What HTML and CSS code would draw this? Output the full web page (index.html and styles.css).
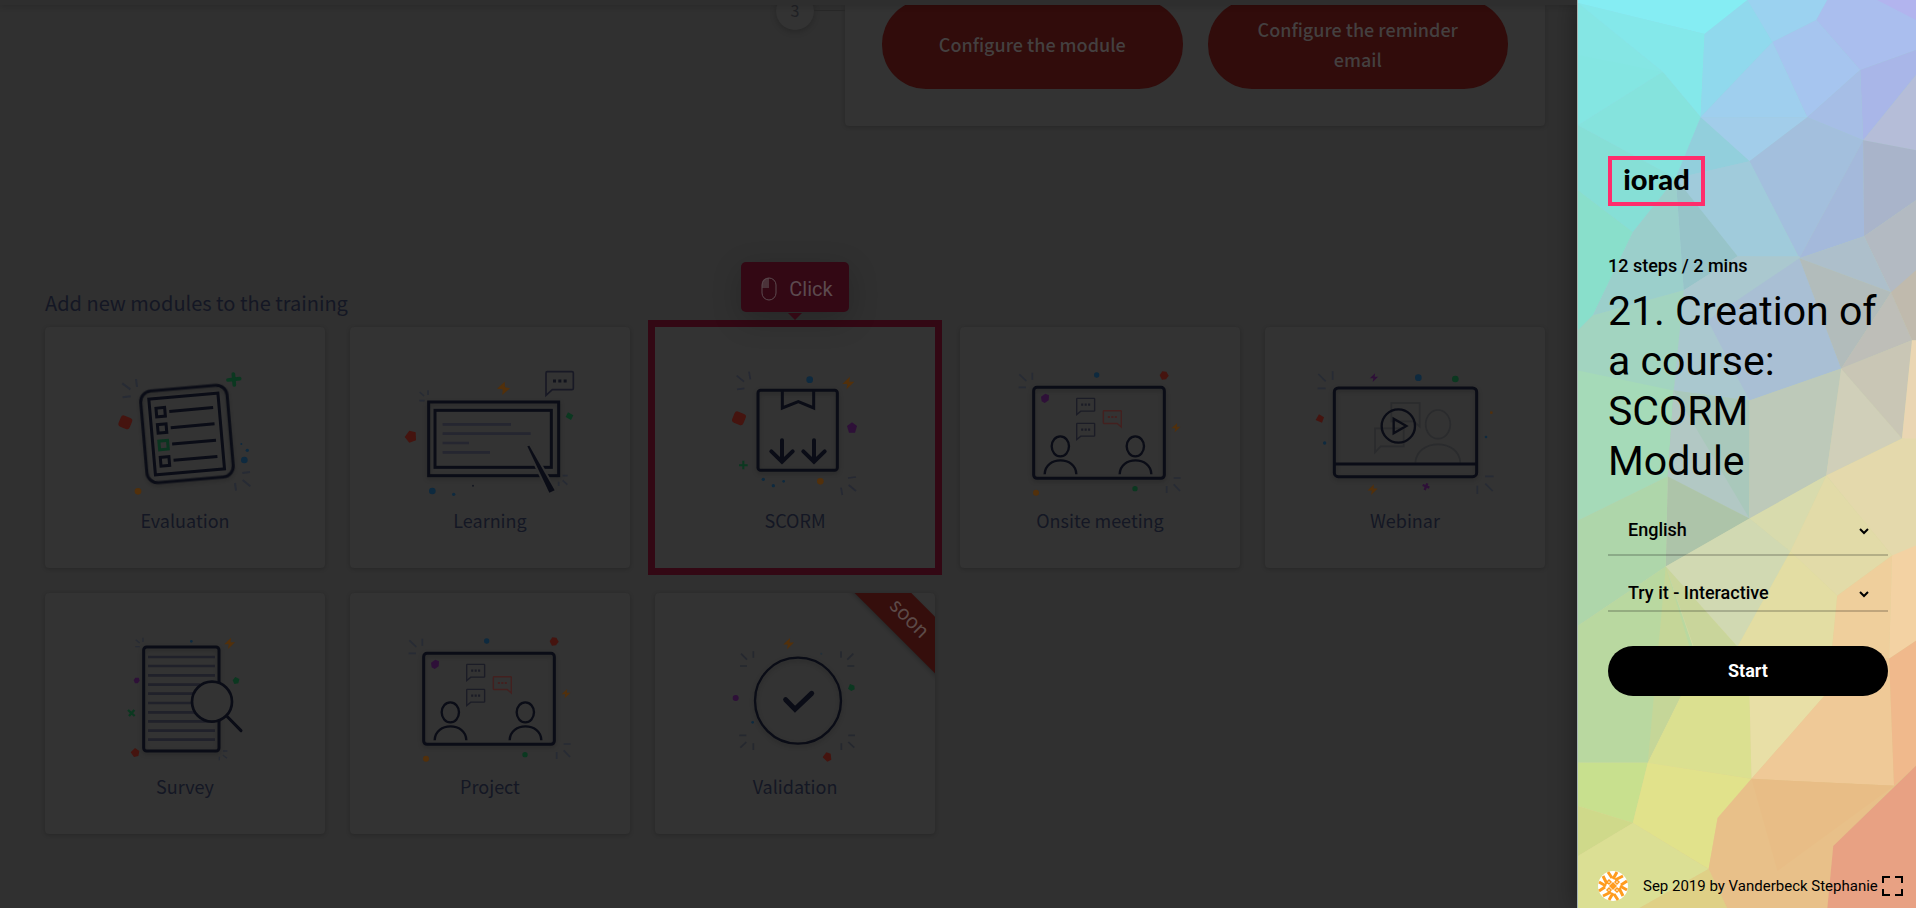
FILE: index.html
```html
<!DOCTYPE html>
<html lang="en">
<head>
    <meta charset="utf-8">
    <meta name="viewport" content="width=device-width, initial-scale=1">
    <title>21. Creation of a course: SCORM Module</title>
    <link rel="stylesheet" href="styles.css">
</head>
<body>
    <!-- Shared shapes for the module drawings -->
    <svg class="defs" width="0" height="0" aria-hidden="true">
        <symbol id="bolt" viewBox="-20 -20 40 40" overflow="visible">
            <path d="M5-20L-19 3H-3L-6 20L19-4H3Z"/>
        </symbol>
        <symbol id="bubble" viewBox="0 0 56 50" overflow="visible">
            <path d="M4 2H52Q54 2 54 4V37Q54 39 52 39H14L2 49V4Q2 2 4 2Z" fill="none" stroke="currentColor" stroke-width="4"/>
            <path d="M15 20h6M25 20h6M35 20h6" stroke="currentColor" stroke-width="6"/>
        </symbol>
        <symbol id="person" viewBox="0 0 100 116" overflow="visible">
            <ellipse cx="49" cy="32" rx="26" ry="30"/>
            <path d="M2 116C3 60 96 60 97 116"/>
        </symbol>
        <symbol id="meeting" viewBox="150 141 600 390">
            <g fill="none" stroke="#272b34" stroke-width="5">
                <path d="M208 163L229 183M247 158V179M206 202H228M671 474H692M671 493L690 513M650 498V519"/>
            </g>
            <rect x="251" y="202" width="392" height="273" rx="10" class="ink shade"/>
            <g class="ink thin">
                <use href="#person" x="282" y="347" width="100" height="116"/>
                <use href="#person" x="507" y="347" width="100" height="116"/>
            </g>
            <use href="#bubble" x="378" y="233" width="58" height="52" color="#1b1c26"/>
            <use href="#bubble" x="378" y="308" width="58" height="52" color="#1b1c26"/>
            <g transform="translate(516 270) scale(-1 1)">
                <use href="#bubble" width="58" height="52" color="#43201f"/>
            </g>
            <path d="M273 230l13-9 11 5-1 15-12 8-9-5z" class="purple"/>
            <circle cx="440" cy="165" r="8" class="blue"/>
            <path d="M637 154l12 1 7 12-8 11-12 1-7-13z" class="red"/>
            <use href="#bolt" x="664" y="309" width="28" height="28" class="orange"/>
            <circle cx="258" cy="518" r="9" class="orange"/>
            <circle cx="555" cy="506" r="8" class="green"/>
        </symbol>
    </svg>

    <main class="training">
        <div class="topbar"></div>

        <section class="timeline">
            <span class="step-number">3</span>
            <div class="step-card">
                <button type="button" class="pill">Configure the module</button>
                <button type="button" class="pill">Configure the reminder email</button>
            </div>
        </section>

        <section class="modules">
            <h2>Add new modules to the training</h2>
            <div class="module-grid">
                <div class="module">
                    <svg class="art" viewBox="165 261 600 390" aria-hidden="true">
                        <path d="M277 310L301 328M318 297L321 321M278 352L302 349M637 579L660 576M638 600L661 619M615 609L618 632" fill="none" stroke="#272b34" stroke-width="6"/>
                        <rect x="341" y="324" width="260" height="276" rx="32" transform="rotate(-5 471 462)" class="ink shade"/>
                        <rect x="366" y="348" width="208" height="228" transform="rotate(-5 470 462)" class="ink"/>
                        <g transform="rotate(-5 470 462)" class="ink">
                            <rect x="385" y="377" width="26" height="26"/>
                            <rect x="385" y="426" width="26" height="26"/>
                            <rect x="385" y="476" width="26" height="26" stroke="#0b3520"/>
                            <rect x="385" y="525" width="26" height="26"/>
                            <path d="M424 390H556M424 439H556M424 488H556M424 537H556"/>
                        </g>
                        <path d="M610 282l3 33M594 300l35-4" stroke="#0b3820" stroke-width="11" stroke-linecap="round"/>
                        <rect x="268" y="409" width="36" height="36" rx="9" transform="rotate(22 286 427)" class="red"/>
                        <circle cx="324" cy="634" r="10" class="orange"/>
                        <circle cx="643" cy="540" r="10" class="blue"/>
                        <circle cx="652" cy="511" r="5" class="blue"/>
                        <circle cx="634" cy="492" r="3" class="blue"/>
                    </svg>
                    <span class="module-name">Evaluation</span>
                </div>

                <div class="module">
                    <svg class="art" viewBox="150 171 600 390" aria-hidden="true">
                        <path d="M239 246L252 258M264 241V255M238 272H254M668 497H683M668 511L682 524M656 515V528" fill="none" stroke="#272b34" stroke-width="5"/>
                        <rect x="266" y="276" width="390" height="221" class="ink shade"/>
                        <rect x="285" y="301" width="349" height="171" class="ink"/>
                        <path d="M308 343H513M308 371H572M308 399H387M308 427H450" stroke="#252630" stroke-width="8"/>
                        <path d="M562 409L568 407L644 541L628 548Z" fill="#0a0c16" stroke="#333" stroke-width="12" paint-order="stroke"/>
                        <path d="M622 185H696Q700 185 700 189V235Q700 239 696 239H637L618 256V189Q618 185 622 185Z" fill="none" stroke="#181925" stroke-width="5"/>
                        <path d="M639 213h9M655 213h9M671 213h9" stroke="#11131d" stroke-width="9"/>
                        <path d="M494 215l-23 21 17 2-1 17 23-20-15-3z" class="orange"/>
                        <path d="M194 381l14-19 19 5 1 24-20 7z" class="red"/>
                        <path d="M684 307l16 9-7 14-16-9z" class="green"/>
                        <circle cx="277" cy="543" r="10" class="blue"/>
                        <circle cx="341" cy="553" r="5" class="blue"/>
                        <circle cx="399" cy="527" r="3" fill="#151821"/>
                    </svg>
                    <span class="module-name">Learning</span>
                </div>

                <div class="module active">
                    <div class="hint"><svg viewBox="0 0 16 24" aria-hidden="true"><path d="M8 1H7Q1 1 1 7V11H8Z" fill="#4b3239"/><rect x="1" y="1" width="14" height="22" rx="7" fill="none" stroke="#5c4a4f" stroke-width="1"/></svg>Click</div>
                    <svg class="art" viewBox="165 351 600 390" aria-hidden="true">
                        <path d="M290 377L312 395M327 365L331 388M291 418L313 415M624 684L648 681M626 705L648 723M603 713L607 735" fill="none" stroke="#262933" stroke-width="5"/>
                        <rect x="354" y="421" width="238" height="240" rx="8" class="ink shade"/>
                        <path d="M427 421V474L475 455L521 474V421" class="ink"/>
                        <path d="M426 571V635M394 604L426 635L458 604M522 571V635M490 604L522 635L554 604" class="ink round"/>
                        <circle cx="509" cy="389" r="10" class="blue"/>
                        <use href="#bolt" x="606" y="380" width="38" height="38" class="orange"/>
                        <rect x="279" y="487" width="36" height="36" rx="9" transform="rotate(22 297 505)" class="red"/>
                        <path d="M636 517l15 11-6 20h-18l-6-20z" class="purple"/>
                        <path d="M310 632v26M297 646h26" stroke="#0b3820" stroke-width="6"/>
                        <circle cx="370" cy="688" r="5" class="blue"/>
                        <circle cx="400" cy="707" r="5" class="blue"/>
                        <circle cx="431" cy="694" r="4" class="blue"/>
                        <circle cx="541" cy="694" r="10" class="orange"/>
                    </svg>
                    <span class="module-name">SCORM</span>
                </div>

                <div class="module">
                    <svg class="art" aria-hidden="true"><use href="#meeting"/></svg>
                    <span class="module-name">Onsite meeting</span>
                </div>

                <div class="module">
                    <svg class="art" viewBox="165 141 600 390" aria-hidden="true">
                        <path d="M205 162L227 184M248 154V179M203 205H227M705 469H731M706 491L728 513M682 497V522" fill="none" stroke="#272b34" stroke-width="5"/>
                        <g fill="none" stroke="#2a2b2d" stroke-width="5">
                            <path d="M424 249H509V320L492 304H424ZM461 325V379H392L375 397V325Z"/>
                            <ellipse cx="564" cy="313" rx="37" ry="43"/>
                            <path d="M496 428C500 355 628 355 631 428"/>
                        </g>
                        <rect x="253" y="204" width="427" height="266" rx="12" class="ink shade"/>
                        <path d="M253 432H680" class="ink"/>
                        <circle cx="445" cy="318" r="50" class="ink thin"/>
                        <path d="M431 296V340L469 318Z" class="ink thin"/>
                        <use href="#bolt" x="359" y="160" width="26" height="26" class="purple"/>
                        <circle cx="505" cy="173" r="10" class="blue"/>
                        <circle cx="616" cy="177" r="10" class="green"/>
                        <path d="M207 283l15 9-6 16-19-8z" class="red"/>
                        <circle cx="224" cy="369" r="5" class="blue"/>
                        <circle cx="724" cy="278" r="4" class="orange"/>
                        <circle cx="708" cy="351" r="4" class="blue"/>
                        <use href="#bolt" x="352" y="493" width="32" height="32" class="orange"/>
                        <path d="M518 495l20 8M532 490l-8 20" stroke="#2e1038" stroke-width="7"/>
                    </svg>
                    <span class="module-name">Webinar</span>
                </div>

                <div class="module">
                    <svg class="art" viewBox="165 159 600 390" aria-hidden="true">
                        <path d="M317 179L329 189M339 173V186M316 200H329M579 513H592M579 526L591 535M568 530V541" fill="none" stroke="#272b34" stroke-width="4"/>
                        <rect x="341" y="201" width="226" height="312" rx="9" class="ink shade"/>
                        <path d="M354 231H555M354 258H555M354 286H555M354 314H510M354 341H500M354 369H490M354 397H500M354 424H555M354 452H555M354 479H555" stroke="#20212a" stroke-width="8"/>
                        <circle cx="546" cy="365" r="60" fill="#333" stroke="#0a0c16" stroke-width="8"/>
                        <path d="M590 408L633 452" class="ink" stroke-linecap="round"/>
                        <circle cx="484" cy="184" r="4" class="blue"/>
                        <use href="#bolt" x="582" y="173" width="34" height="34" class="orange"/>
                        <path d="M316 293h10l3 9-6 8h-8l-4-9z" class="purple"/>
                        <path d="M616 291l12 6-3 13-12 2-5-11z" class="green"/>
                        <path d="M294 390l20 18M313 390l-16 18" stroke="#0b3820" stroke-width="7"/>
                        <path d="M315 504l13 9-3 15-13 3-10-14z" class="red"/>
                    </svg>
                    <span class="module-name">Survey</span>
                </div>

                <div class="module">
                    <svg class="art" aria-hidden="true"><use href="#meeting"/></svg>
                    <span class="module-name">Project</span>
                </div>

                <div class="module">
                    <div class="ribbon-box"><span class="ribbon">soon</span></div>
                    <svg class="art" viewBox="165 159 600 390" aria-hidden="true">
                        <path d="M303 221L321 239M340 214V233M300 258H321M640 221L622 239M603 214V233M622 258H643M298 466H319M301 503L319 486M340 490V510M625 466H645M625 486L643 503M604 490V510" fill="none" stroke="#25282f" stroke-width="5"/>
                        <circle cx="474" cy="362" r="129" class="ink shade thin"/>
                        <path d="M437 359L465 388L515 340" class="ink round check"/>
                        <use href="#bolt" x="429" y="174" width="34" height="34" class="orange"/>
                        <circle cx="287" cy="354" r="9" class="purple"/>
                        <path d="M630 312l13 5 1 11-10 5-10-7z" class="green"/>
                        <circle cx="544" cy="221" r="3" fill="#22303a"/>
                        <circle cx="338" cy="427" r="4" class="blue"/>
                        <path d="M559 517l13 4 2 18-12 6-14-13z" class="red"/>
                    </svg>
                    <span class="module-name">Validation</span>
                </div>
            </div>
        </section>
    </main>

    <aside class="panel">
        <svg class="panel-bg" viewBox="0 0 339 908" preserveAspectRatio="none" aria-hidden="true">
            <linearGradient id="base" x1="0.2" y1="0" x2="0.5" y2="1">
                <stop offset="0" stop-color="#8fdfee"/>
                <stop offset="0.3" stop-color="#a4cad2"/>
                <stop offset="0.5" stop-color="#bccdb6"/>
                <stop offset="0.7" stop-color="#dcdca2"/>
                <stop offset="1" stop-color="#e2c58c"/>
            </linearGradient>
            <rect width="339" height="908" fill="url(#base)"/>
            <path fill="#dbe09a" d="M116 640H255L248 700H100Z"/>
            <path fill="#85edf3" d="M0 0H170L127 34L0 3Z"/>
            <path fill="#84e8ea" d="M0 3L127 34L123 117L85 72Z"/>
            <path fill="#85e6e4" d="M0 3L85 72L0 60Z"/>
            <path fill="#84e6e2" d="M0 55L85 72L0 125Z"/>
            <path fill="#85e3dd" d="M85 72L123 117L98 178L0 125Z"/>
            <path fill="#86dfd6" d="M0 125L98 178L55 232L0 190Z"/>
            <path fill="#89dfcb" d="M0 190L55 232L15 315L0 330Z"/>
            <path fill="#90d9ed" d="M170 0L195 42L123 117L127 34Z"/>
            <path fill="#9bd2f0" d="M170 0H250L239 20L195 42Z"/>
            <path fill="#aabeee" d="M250 0H339V50L283 70L239 20Z"/>
            <path fill="#b2b4ee" d="M300 0H339V20Z"/>
            <path fill="#a6c5ef" d="M239 20L283 70L230 117L195 42Z"/>
            <path fill="#9fcfee" d="M195 42L230 117H123Z"/>
            <path fill="#a2cdea" d="M123 117H230L172 161Z"/>
            <path fill="#a9b6e8" d="M283 70L339 50V75L286 140Z"/>
            <path fill="#a6bee6" d="M230 117L283 70L286 140Z"/>
            <path fill="#b5bdd8" d="M339 75V150L286 140Z"/>
            <path fill="#a3bfdd" d="M172 161L230 117L286 140L222 258Z"/>
            <path fill="#a4b9db" d="M286 140L287 236L222 258Z"/>
            <path fill="#92cfdc" d="M123 117L172 161L98 178Z"/>
            <path fill="#a0cbdb" d="M98 178L172 161L222 258L160 256Z"/>
            <path fill="#a9b4ca" d="M286 140L339 150V200L287 236Z"/>
            <path fill="#b3bac2" d="M339 200V300L314 292L287 236Z"/>
            <path fill="#97c4c9" d="M98 178L160 256L106 290Z"/>
            <path fill="#9bcfcb" d="M98 178L55 232L15 315L106 290Z"/>
            <path fill="#aac8cf" d="M106 290L160 256H222L264 368L172 400L96 390Z"/>
            <path fill="#a9bfd4" d="M222 258L264 368L172 400L130 320Z"/>
            <path fill="#adbfcb" d="M222 258L287 236L314 292Z"/>
            <path fill="#b2bcbb" d="M222 258L314 292L264 368Z"/>
            <path fill="#bebeb8" d="M314 292L335 340L264 368Z"/>
            <path fill="#c0baad" d="M314 292L339 270V340H335Z"/>
            <path fill="#a2d4c0" d="M15 315L106 290L96 390L0 375V330Z"/>
            <path fill="#a5dab8" d="M0 370L96 390L90 476L0 520Z"/>
            <path fill="#a9c8bb" d="M96 390L172 400V518L90 476Z"/>
            <path fill="#b2c8c4" d="M96 390L172 518L90 476Z"/>
            <path fill="#bdc9b9" d="M172 400L264 368L249 475L172 518Z"/>
            <path fill="#d0cfb9" d="M264 368L325 438L249 475Z"/>
            <path fill="#c9c6b5" d="M264 368L335 340L325 438Z"/>
            <path fill="#ead6b3" d="M335 340H339V440L325 438Z"/>
            <path fill="#e4d9ac" d="M249 475L325 438H339V550L315 555Z"/>
            <path fill="#adc4a9" d="M90 476L172 518L88 566Z"/>
            <path fill="#d8dbad" d="M172 518L249 475L213 551Z"/>
            <path fill="#e2dba8" d="M249 475L315 555L260 595L213 551Z"/>
            <path fill="#aed6aa" d="M0 520L90 476L88 566L0 625Z"/>
            <path fill="#d1d9b2" d="M88 566L172 518L213 551L160 646Z"/>
            <path fill="#c9d59b" d="M88 566L160 646H116Z"/>
            <path fill="#b9d8a0" d="M0 625L88 566L116 648L70 762H0Z"/>
            <path fill="#c5d698" d="M88 566L116 660L104 694L70 762Z"/>
            <path fill="#e3dda3" d="M213 551L260 595L255 646H160Z"/>
            <path fill="#efcf9c" d="M260 595L315 555L312 658L255 646Z"/>
            <path fill="#f3d2a3" d="M339 545V640L312 658L315 555Z"/>
            <path fill="#dbe090" d="M104 694H172L174 778L70 762Z"/>
            <path fill="#e8dfa6" d="M172 694H248L174 778Z"/>
            <path fill="#efc997" d="M248 694L255 646L312 658L317 785L174 778Z"/>
            <path fill="#f0b98c" d="M312 658L339 640V765L317 785Z"/>
            <path fill="#c8e08e" d="M0 762H70L55 822L0 805Z"/>
            <path fill="#cfd98a" d="M0 805L55 822L0 855Z"/>
            <path fill="#e1e28b" d="M70 762L174 778L140 817L131 868L55 822Z"/>
            <path fill="#dbdf94" d="M0 855L55 822L131 868L60 908H0Z"/>
            <path fill="#e8c089" d="M174 778L317 785L256 845L250 908H150L131 868L140 817Z"/>
            <path fill="#e8bd86" d="M174 778L317 785L200 870Z"/>
            <path fill="#e8a183" d="M256 845L339 765V908H250Z"/>
            <path fill="#dfd086" d="M131 868L150 908H60Z"/>
        </svg>

        <div class="intro">
            <a class="logo" href="#">iorad</a>
            <p class="meta">12 steps / 2 mins</p>
            <h1>21. Creation of a course: SCORM Module</h1>

            <div class="field">
                <select aria-label="Language">
                    <option>English</option>
                </select>
                <svg viewBox="0 0 12 8" aria-hidden="true"><path d="M2 2L6 6L10 2"/></svg>
            </div>
            <div class="field compact">
                <select aria-label="Mode">
                    <option>Try it - Interactive</option>
                </select>
                <svg viewBox="0 0 12 8" aria-hidden="true"><path d="M2 2L6 6L10 2"/></svg>
            </div>
            <button type="button" class="start">Start</button>
        </div>

        <footer class="credits">
            <svg class="avatar" viewBox="0 0 30 30" aria-hidden="true">
                <circle cx="15" cy="15" r="15" fill="#fff"/>
                <g id="quarter" fill="none" stroke="#ff9c1f">
                    <path d="M10 1L14 7M19 1L15 8M25 5L17 9" stroke-width="3"/>
                    <path d="M11 9L13 11L11 13L9 11Z" stroke-width="1.5"/>
                </g>
                <use href="#quarter" transform="rotate(90 15 15)"/>
                <use href="#quarter" transform="rotate(180 15 15)"/>
                <use href="#quarter" transform="rotate(270 15 15)"/>
                <path d="M15 11L19 15L15 19L11 15Z" fill="#ff9c1f"/>
            </svg>
            <span>Sep 2019 by Vanderbeck Stephanie</span>
            <button type="button" class="fullscreen" aria-label="Full screen">
                <svg viewBox="0 0 21 20" aria-hidden="true"><path d="M1 7V1H8M13 1H20V7M20 13V19H13M8 19H1V13"/></svg>
            </button>
        </footer>
    </aside>
</body>
</html>
```

FILE: styles.css
```css
* {
    box-sizing: border-box;
}

body {
    margin: 0;
    min-height: 100vh;
    display: flex;
    background: #303030;
    color: #141724;
    font-family: "Noto Sans CJK SC", "Noto Sans", sans-serif;
}

button, select {
    font: inherit;
    border: none;
    cursor: pointer;
}

.defs {
    position: absolute;
}

/* Dimmed training page */
.training {
    flex: 1;
    min-width: 0;
    overflow: hidden;
}

.topbar {
    position: relative;
    z-index: 1;
    height: 5px;
    background: #2e2e2e;
    box-shadow: 0 1px 6px rgba(0, 0, 0, 0.2);
}

.timeline {
    display: flex;
    justify-content: flex-end;
    padding-right: 32px;
}

.step-number {
    width: 38px;
    height: 38px;
    margin-top: -13px;
    border-radius: 50%;
    background: #333;
    color: #202125;
    font-size: 16px;
    line-height: 36px;
    text-align: center;
    box-shadow: 0 2px 6px rgba(0, 0, 0, 0.2);
}

.step-card {
    position: relative;
    width: 700px;
    margin-left: 31px;
    padding: 0 37px 37px;
    display: flex;
    gap: 25px;
    background: #333;
    border-radius: 0 0 4px 4px;
    box-shadow: 0 1px 4px rgba(0, 0, 0, 0.2);
}

.step-card::before {
    content: "";
    position: absolute;
    top: 5px;
    left: -31px;
    width: 31px;
    height: 1px;
    background: #282828;
}

.pill {
    flex: 1;
    height: 89px;
    margin-top: -5px;
    padding: 0 40px 2px;
    border-radius: 44px;
    background: #310c0b;
    color: #444040;
    font-size: 18px;
    font-weight: 500;
    line-height: 30px;
}

.modules {
    padding: 162px 32px 75px 45px;
}

.modules h2 {
    margin: 0 0 9px;
    font-size: 20px;
    font-weight: 400;
    line-height: 30px;
}

.module-grid {
    display: grid;
    grid-template-columns: repeat(5, 1fr);
    gap: 25px;
}

.module {
    position: relative;
    height: 241px;
    padding-top: 40px;
    display: flex;
    flex-direction: column;
    align-items: center;
    gap: 8px;
    background: #333;
    border-radius: 4px;
    box-shadow: 0 1px 4px rgba(0, 0, 0, 0.2);
}

.module.active {
    border-radius: 0;
    box-shadow: 0 0 0 7px #330814;
}

.module-name {
    font-size: 18px;
    line-height: 30px;
}

.art {
    width: 200px;
    height: 130px;
}

.ink {
    fill: none;
    stroke: #0a0c16;
    stroke-width: 9;
}

.thin {
    stroke-width: 7;
}

.round {
    stroke-width: 12;
    stroke-linecap: round;
}

.check {
    stroke-width: 15;
}

.shade {
    filter: drop-shadow(0 6px 6px rgba(0, 0, 0, 0.2));
}

.red { fill: #45140f; }
.blue { fill: #0e2a3f; }
.green { fill: #0b3820; }
.orange { fill: #52300b; }
.purple { fill: #2e1038; }

/* Callout over the highlighted module */
.hint {
    position: absolute;
    z-index: 1;
    bottom: calc(100% + 15px);
    left: 50%;
    transform: translateX(-50%);
    width: 108px;
    height: 50px;
    padding: 3px 0 0 4px;
    display: flex;
    align-items: center;
    justify-content: center;
    gap: 12px;
    border-radius: 5px;
    background: #330814;
    color: #5c4a4f;
    font-family: Roboto, sans-serif;
    font-size: 20px;
    box-shadow: 0 8px 30px rgba(0, 0, 0, 0.2);
}

.hint svg {
    width: 16px;
    height: 24px;
}

.hint::after {
    content: "";
    position: absolute;
    top: 51px;
    left: 47px;
    border: 7px solid transparent;
    border-top-color: #330814;
    border-bottom: none;
}

.ribbon-box {
    position: absolute;
    inset: 0;
    overflow: hidden;
    border-radius: 4px;
}

.ribbon {
    position: absolute;
    top: 6px;
    right: -44px;
    width: 140px;
    height: 40px;
    transform: rotate(45deg);
    background: #350e0c;
    color: #5c4a48;
    font-size: 20px;
    line-height: 36px;
    text-align: center;
    box-shadow: 0 2px 4px rgba(0, 0, 0, 0.2);
}

/* Tutorial panel */
.panel {
    position: relative;
    flex: 0 0 339px;
    display: flex;
    flex-direction: column;
    border-left: 1px solid #a9b5b3;
    color: #000;
    font-family: Roboto, sans-serif;
    box-shadow: 0 0 25px rgba(0, 0, 0, 0.4);
}

.panel-bg {
    position: absolute;
    inset: 0;
    width: 100%;
    height: 100%;
}

.intro {
    position: relative;
    flex: 1;
    display: flex;
    flex-direction: column;
    justify-content: center;
    padding: 0 28px 0 30px;
}

.logo {
    align-self: flex-start;
    width: 97px;
    height: 50px;
    border: 4px solid #ff2d6c;
    color: #000;
    font-family: Lato, sans-serif;
    font-size: 29px;
    font-weight: 900;
    line-height: 38px;
    text-align: center;
    text-decoration: none;
}

.meta {
    margin: 48px 0 8px;
    font-size: 18px;
    font-weight: 500;
    line-height: 24px;
}

h1 {
    margin: 0 0 20px;
    font-size: 41px;
    font-weight: 400;
    line-height: 50px;
}

.field {
    position: relative;
    height: 50px;
    margin-bottom: 20px;
    border-bottom: 2px solid rgba(0, 0, 0, 0.2);
}

.field.compact {
    height: 36px;
    margin-bottom: 34px;
}

.field select {
    width: 100%;
    height: 100%;
    padding: 0 20px;
    appearance: none;
    background: none;
    color: #000;
    font-size: 18px;
    font-weight: 500;
}

.field svg {
    position: absolute;
    top: calc(50% - 3px);
    right: 18px;
    width: 12px;
    height: 8px;
    fill: none;
    stroke: #000;
    stroke-width: 2;
    pointer-events: none;
}

.start {
    height: 50px;
    border-radius: 25px;
    background: #000;
    color: #fff;
    font-size: 18px;
    font-weight: 700;
}

.credits {
    position: relative;
    height: 58px;
    padding: 12px 13px 0 20px;
    display: flex;
    align-items: center;
    font-size: 15px;
    white-space: nowrap;
}

.avatar {
    width: 30px;
    height: 30px;
    margin-right: 15px;
}

.fullscreen {
    width: 21px;
    height: 20px;
    margin-left: auto;
    padding: 0;
    background: none;
}

.fullscreen svg {
    display: block;
    fill: none;
    stroke: #000;
    stroke-width: 2;
}
```
